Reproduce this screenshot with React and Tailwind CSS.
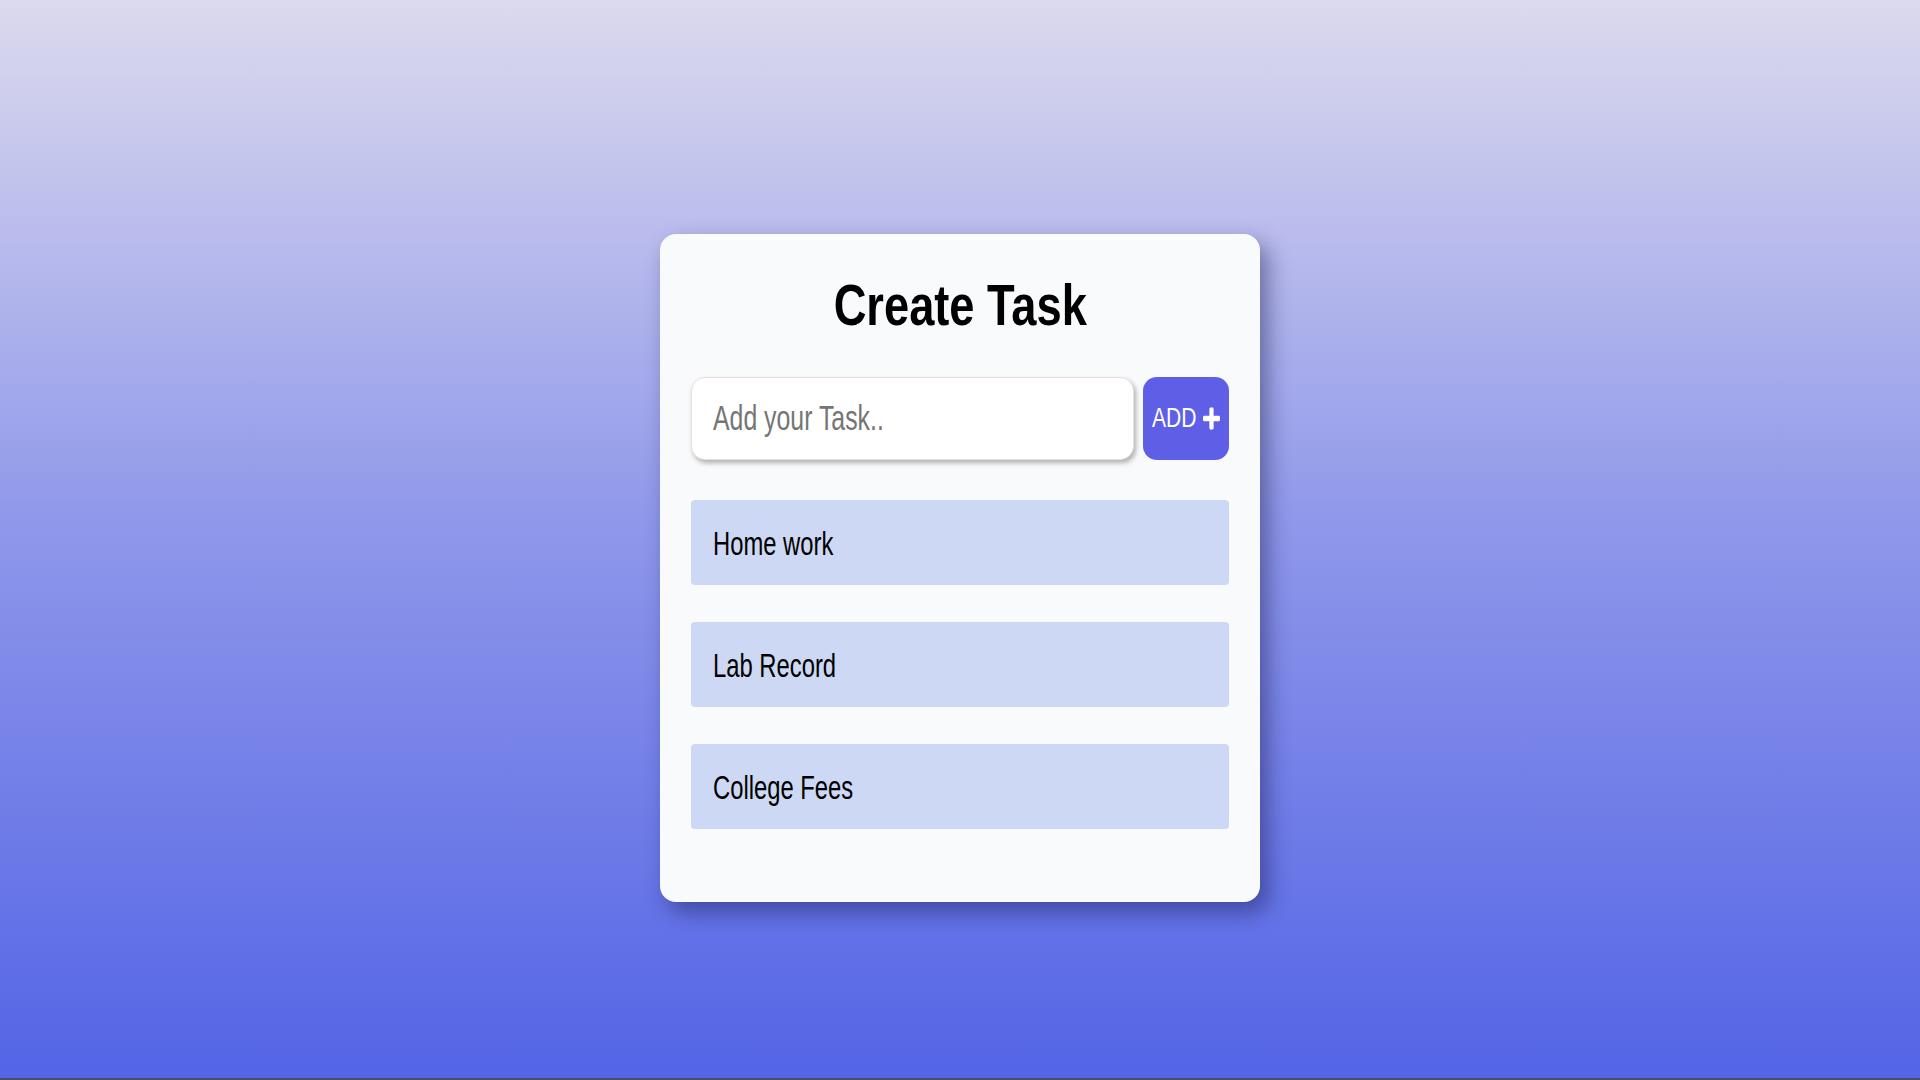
import { useState } from "react";

const initialTasks = ["Home work", "Lab Record", "College Fees"];

function PlusIcon() {
  return (
    <svg
      viewBox="0 0 448 512"
      preserveAspectRatio="none"
      className="-ml-[6px] h-[25px] w-[17px] fill-white"
    >
      <path d="M416 200H280V64c0-17.67-14.33-32-32-32h-48c-17.67 0-32 14.33-32 32v136H32c-17.67 0-32 14.33-32 32v48c0 17.67 14.33 32 32 32h136v136c0 17.67 14.33 32 32 32h48c17.67 0 32-14.33 32-32V312h136c17.67 0 32-14.33 32-32v-48c0-17.67-14.33-32-32-32z" />
    </svg>
  );
}

export default function App() {
  const [tasks, setTasks] = useState(initialTasks);
  const [value, setValue] = useState("");

  const addTask = () => {
    if (!value.trim()) return;
    setTasks((prev) => [...prev, value.trim()]);
    setValue("");
  };

  return (
    <div className="flex min-h-screen flex-col bg-[linear-gradient(180deg,#dcdaee_0%,#8f98ea_48%,#5364e6_100%)] font-['Liberation_Sans',Arial,sans-serif]">
      <div className="flex flex-1 justify-center pt-[234px]">
        <div className="h-fit w-[600px] rounded-2xl bg-[#f8fafc] px-[31px] pt-[42px] pb-[73px] shadow-[8px_10px_22px_rgba(20,20,70,0.45)]">
          <h1 className="text-center text-[58px] leading-none font-bold text-black">
            <span className="inline-block scale-x-[0.78] whitespace-nowrap">
              Create Task
            </span>
          </h1>

          <div className="mt-[43px] flex gap-[9px]">
            <div className="flex h-[83px] w-[443px] items-center overflow-hidden rounded-[14px] border border-[#ecdede] bg-white pl-[21px] shadow-[2px_3px_5px_rgba(0,0,0,0.3)]">
              <input
                type="text"
                value={value}
                onChange={(e) => setValue(e.target.value)}
                onKeyDown={(e) => e.key === "Enter" && addTask()}
                placeholder="Add your Task.."
                className="w-[590px] shrink-0 origin-left scale-x-[0.71] bg-transparent text-[35px] text-black outline-none placeholder:text-[#757575]"
              />
            </div>
            <button
              type="button"
              onClick={addTask}
              className="flex h-[83px] w-[86px] items-center justify-center rounded-[14px] bg-[#5e5fe6] text-white"
            >
              <span className="inline-block origin-left scale-x-[0.78] text-[27px] leading-none">
                ADD
              </span>
              <PlusIcon />
            </button>
          </div>

          <div className="mt-[40px] flex flex-col gap-[37px]">
            {tasks.map((task, i) => (
              <div
                key={i}
                className="flex h-[85px] items-center rounded bg-[#cdd9f4] pl-[22px]"
              >
                <span className="inline-block origin-left scale-x-[0.7] text-[34px] leading-none whitespace-nowrap text-black">
                  {task}
                </span>
              </div>
            ))}
          </div>
        </div>
      </div>
      <div className="h-[2px] bg-[#4b4d63]" />
    </div>
  );
}
